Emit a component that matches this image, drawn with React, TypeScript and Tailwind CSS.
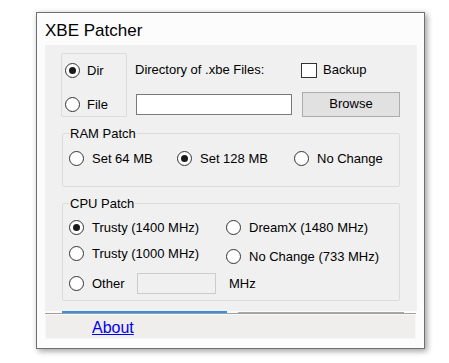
import React, { useState } from "react";

const font = { fontFamily: '"Liberation Sans", Arial, sans-serif' };

function Radio({ checked, label, onClick, gap = "ml-[8px]" }: { checked: boolean; label: string; onClick: () => void; gap?: string }) {
  return (
    <div className="flex items-center h-[15px] cursor-default shrink-0" onClick={onClick}>
      <span className="w-[15px] h-[15px] rounded-full border border-[#333] bg-white flex items-center justify-center shrink-0">
        {checked && <span className="w-[7px] h-[7px] rounded-full bg-[#1a1a1a]" />}
      </span>
      <span className={`${gap} text-[13px] leading-[15px] text-black whitespace-nowrap`}>{label}</span>
    </div>
  );
}

function Group({ title, className, children }: { title: string; className: string; children: React.ReactNode }) {
  return (
    <div className={`relative border border-[#dcdcdc] rounded-[2px] ${className}`}>
      <span className="absolute left-[6px] top-[-8px] px-[1px] bg-[#f0f0f0] text-[13px] leading-[15px] text-black">{title}</span>
      {children}
    </div>
  );
}

export default function App() {
  const [mode, setMode] = useState("dir");
  const [backup, setBackup] = useState(false);
  const [ram, setRam] = useState("128");
  const [cpu, setCpu] = useState("1400");

  return (
    <div className="min-h-screen bg-white pt-[12px] pl-[36px]" style={font}>
      <div className="w-[389px] h-[337px] border border-[#707070] bg-[#fcfcfc] shadow-[2px_2px_6px_rgba(0,0,0,0.4)] flex flex-col">
        <div className="h-[32px] pl-[8px] pt-[3px] flex items-center text-[17px] text-black">XBE Patcher</div>

        <div className="ml-[8px] mr-[7px] h-[266px] bg-[#f0f0f0] flex flex-col">
          {/* source selection */}
          <div className="flex h-[72px] shrink-0 pt-[8px] pl-[16px]">
            <div className="w-[66px] h-[64px] border border-[#dcdcdc] rounded-[2px] pl-[3px] pt-[9px] flex flex-col gap-[19px]">
              <Radio checked={mode === "dir"} label="Dir" gap="ml-[7px]" onClick={() => setMode("dir")} />
              <Radio checked={mode === "file"} label="File" gap="ml-[7px]" onClick={() => setMode("file")} />
            </div>
            <div className="ml-[8px] flex flex-col">
              <div className="h-[34px] shrink-0 flex items-center">
                <span className="w-[166px] text-[13px] text-black">Directory of .xbe Files:</span>
                <span
                  className="w-[16px] h-[15px] border border-[#333] bg-white flex items-center justify-center"
                  onClick={() => setBackup(!backup)}
                >
                  {backup && <span className="text-[11px] leading-none">✓</span>}
                </span>
                <span className="ml-[6px] text-[13px] text-black">Backup</span>
              </div>
              <div className="h-[34px] shrink-0 flex items-center">
                <input className="ml-[1px] w-[156px] h-[21px] border border-[#7a7a7a] bg-white outline-none px-1 text-[13px]" />
                <button className="ml-[10px] w-[98px] h-[25px] border border-[#adadad] bg-[#e1e1e1] text-[13px] text-black">
                  Browse
                </button>
              </div>
            </div>
          </div>

          {/* RAM */}
          <Group title="RAM Patch" className="mt-[16px] ml-[17px] w-[338px] h-[54px] shrink-0 pl-[6px] pt-[17px]">
            <div className="flex">
              <div className="w-[108px] shrink-0">
                <Radio checked={ram === "64"} label="Set 64 MB" onClick={() => setRam("64")} />
              </div>
              <div className="w-[117px] shrink-0">
                <Radio checked={ram === "128"} label="Set 128 MB" onClick={() => setRam("128")} />
              </div>
              <Radio checked={ram === "none"} label="No Change" onClick={() => setRam("none")} />
            </div>
          </Group>

          {/* CPU */}
          <Group title="CPU Patch" className="mt-[16px] ml-[17px] w-[338px] h-[98px] shrink-0 pl-[6px] pt-[16px]">
            <div className="flex">
              <div className="w-[157px] shrink-0 flex flex-col">
                <Radio checked={cpu === "1400"} label="Trusty (1400 MHz)" onClick={() => setCpu("1400")} />
                <div className="mt-[11px]">
                  <Radio checked={cpu === "1000"} label="Trusty (1000 MHz)" onClick={() => setCpu("1000")} />
                </div>
                <div className="mt-[12px] flex items-center h-[21px]">
                  <div className="w-[68px] shrink-0">
                    <Radio checked={cpu === "other"} label="Other" onClick={() => setCpu("other")} />
                  </div>
                  <div className="w-[79px] h-[21px] border border-[#cccccc] bg-[#f0f0f0] shrink-0" />
                  <span className="ml-[13px] text-[13px] text-black shrink-0">MHz</span>
                </div>
              </div>
              <div className="flex flex-col">
                <Radio checked={cpu === "1480"} label="DreamX (1480 MHz)" onClick={() => setCpu("1480")} />
                <div className="mt-[14px]">
                  <Radio checked={cpu === "733"} label="No Change (733 MHz)" onClick={() => setCpu("733")} />
                </div>
              </div>
            </div>
          </Group>
        </div>

        {/* tab strip edges */}
        <div className="ml-[8px] mr-[7px] h-[2px] flex items-end">
          <div className="ml-[17px] w-[165px] h-[2px] bg-[#3c8fdc]" />
          <div className="ml-[11px] w-[166px] h-px bg-[#a8a8a8]" />
        </div>
        <div className="ml-[8px] mr-[8px] h-px bg-[#a0a0a0]" />
        <div className="ml-[8px] mr-[8px] h-[25px] bg-[#f0eded] border border-[#f8f8f8] flex items-center pl-[46px]">
          <a href="#" className="text-[16px] text-[#0000ee] underline leading-none pt-[2px]">About</a>
        </div>
      </div>
    </div>
  );
}
